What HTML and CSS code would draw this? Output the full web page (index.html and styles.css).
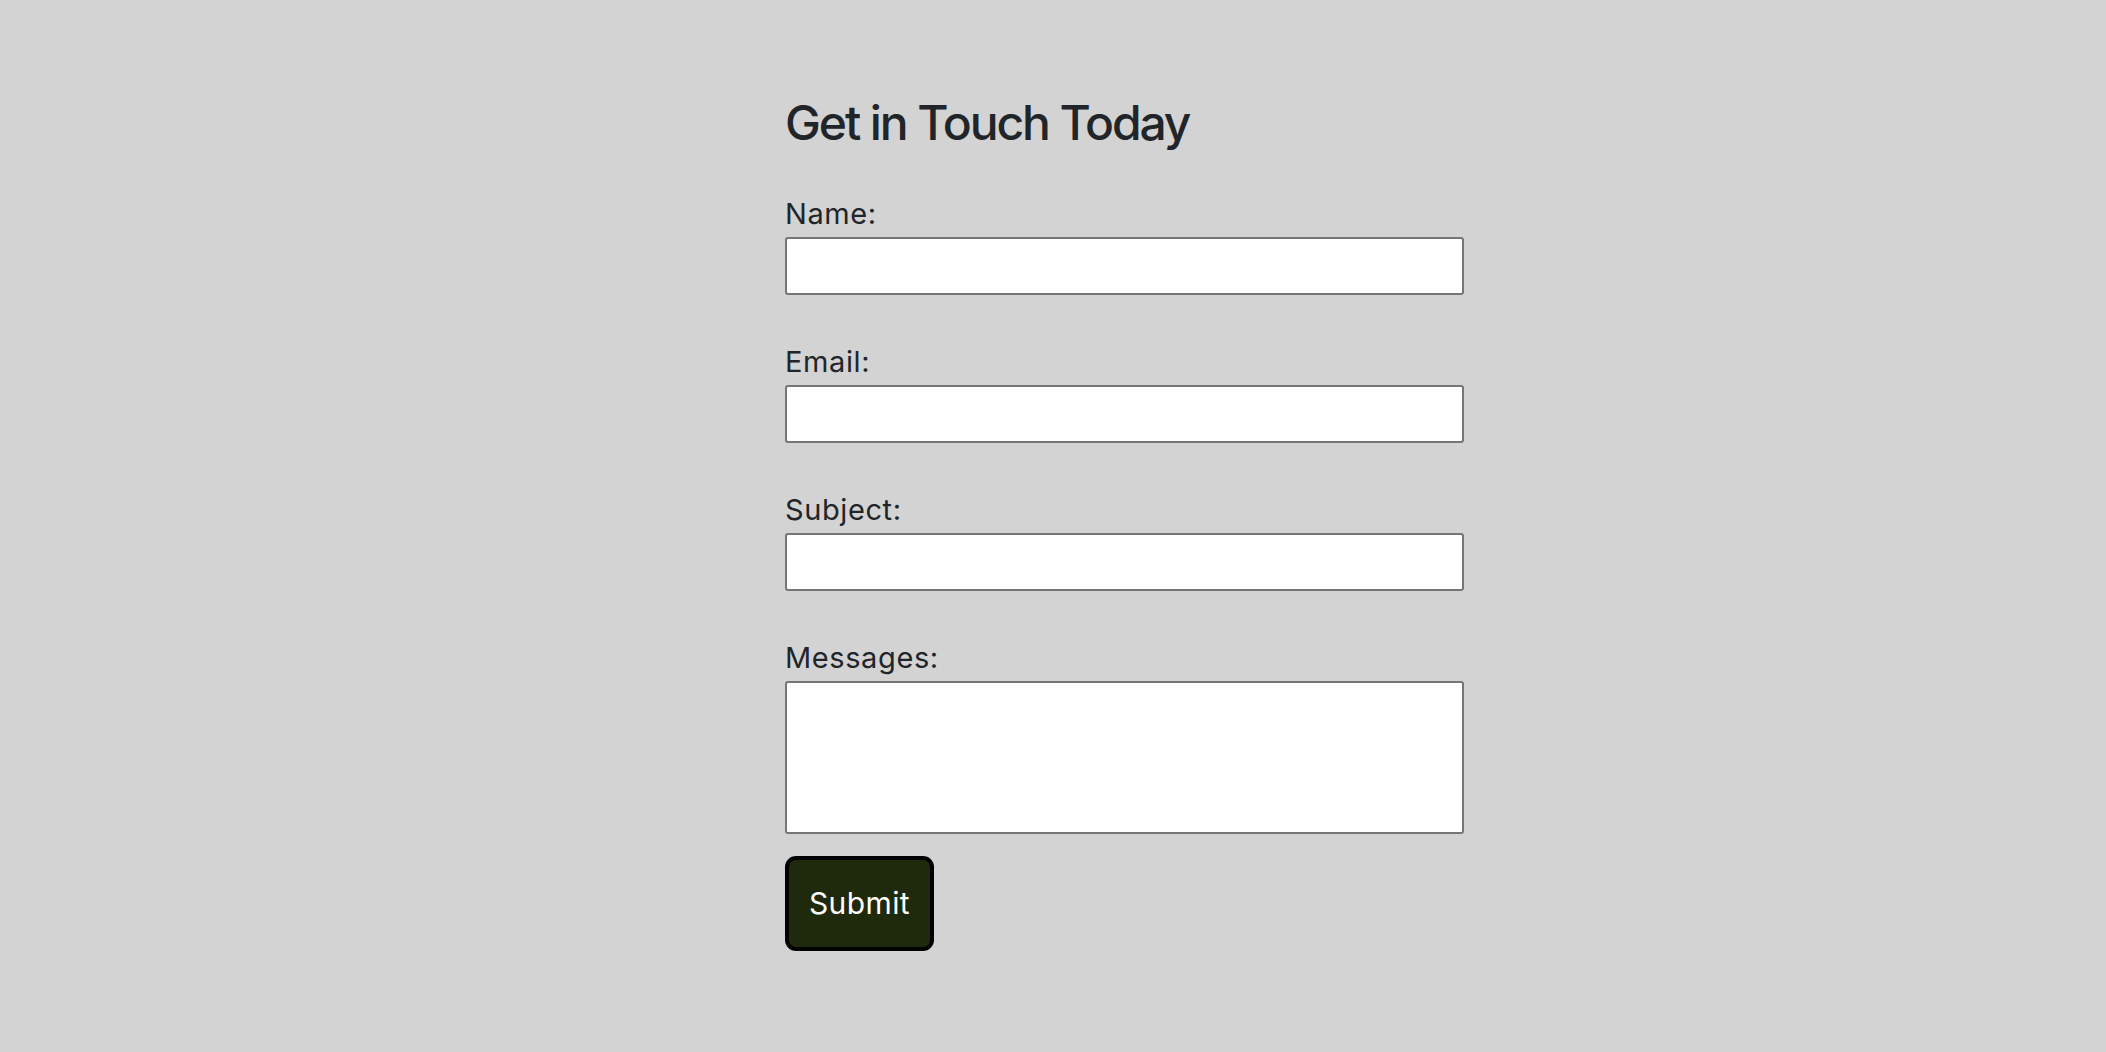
FILE: index.html
```html
<!DOCTYPE html>
<html lang="en">
<head>
<meta charset="utf-8">
<title>Get in Touch Today</title>
<link rel="stylesheet" href="styles.css">
</head>
<body>
<main class="page">
  <h2 class="title">Get in Touch Today</h2>
  <form class="contact-form">
    <div class="field">
      <label class="field-label" for="name">Name:</label>
      <input class="field-input" type="text" id="name">
    </div>
    <div class="field">
      <label class="field-label" for="email">Email:</label>
      <input class="field-input" type="email" id="email">
    </div>
    <div class="field">
      <label class="field-label" for="subject">Subject:</label>
      <input class="field-input" type="text" id="subject">
    </div>
    <div class="field field-last">
      <label class="field-label" for="message">Messages:</label>
      <textarea class="field-input field-textarea" id="message"></textarea>
    </div>
    <button class="submit-btn" type="submit">Submit</button>
  </form>
</main>
</body>
</html>
```
FILE: styles.css
```css
html, body {
  margin: 0;
  padding: 0;
  background: #d3d3d3;
}
body {
  font-family: Inter, "Liberation Sans", sans-serif;
  color: #212529;
  min-height: 1052px;
}
.page {
  margin-left: calc(50% - 268px);
  width: 679px;
  padding-top: 94px;
}
.title {
  margin: 0 0 40px 0;
  font-size: 48px;
  line-height: 58px;
  font-weight: 500;
  letter-spacing: -2.1px;
  color: #212529;
}
.contact-form {
  display: flex;
  flex-direction: column;
}
.field {
  display: flex;
  flex-direction: column;
  margin-bottom: 45px;
}
.field-last {
  margin-bottom: 22px;
}
.field-label {
  font-size: 29px;
  line-height: 43px;
  letter-spacing: 0.6px;
  margin-bottom: 2px;
}
.field-input {
  box-sizing: border-box;
  display: block;
  width: 679px;
  height: 58px;
  margin: 0;
  border: 2px solid #767676;
  border-radius: 3px;
  background: #fff;
  font: inherit;
  padding: 4px 8px;
}
.field-textarea {
  height: 153px;
  resize: none;
}
.submit-btn {
  align-self: flex-start;
  box-sizing: border-box;
  width: 149px;
  height: 95px;
  margin: 0;
  padding: 0;
  border: 4px solid #000;
  border-radius: 11px;
  background: #1f2a0c;
  color: #fff;
  font-family: Inter, "Liberation Sans", sans-serif;
  font-size: 30px;
  line-height: 43px;
  letter-spacing: 0.4px;
}
```
